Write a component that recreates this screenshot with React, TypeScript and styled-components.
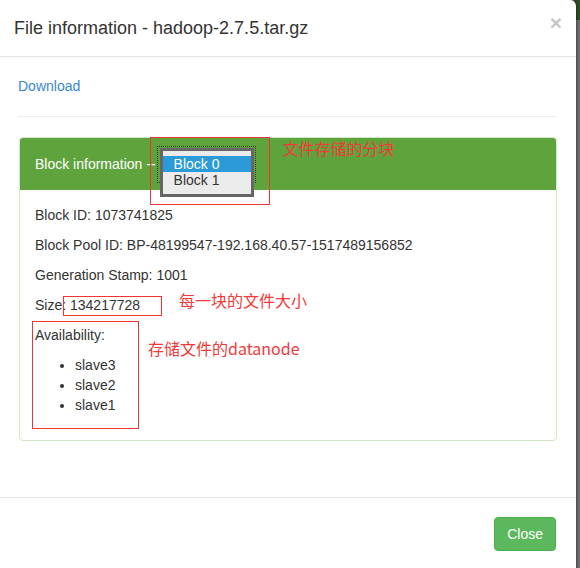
import React from "react";
import styled, { createGlobalStyle } from "styled-components";

const Global = createGlobalStyle`
  html, body { margin: 0; padding: 0; }
  body {
    width: 580px;
    height: 568px;
    overflow: hidden;
    background:
      linear-gradient(#2f4a24, #2f4a24) no-repeat right top / 6px 20px,
      #6c6c6c;
    font-family: "Liberation Sans", Arial, sans-serif;
    font-size: 14px;
    color: #333;
  }
  * { box-sizing: border-box; }
`;

const Modal = styled.div`
  width: 576px;
  height: 568px;
  background: #fff;
  border-radius: 0 6px 0 0;
  box-shadow: 1px 0 2px rgba(0, 0, 0, 0.35);
  display: flex;
  flex-direction: column;
`;

const Header = styled.div`
  height: 57px;
  padding: 15px 14px 15px 14px;
  border-bottom: 1px solid #e5e5e5;
  display: flex;
  justify-content: space-between;
  align-items: flex-start;
`;

const Title = styled.h4`
  margin: 0;
  font-size: 18px;
  line-height: 26px;
  font-weight: 500;
  color: #333;
`;

const CloseX = styled.span`
  font-size: 21px;
  line-height: 16px;
  font-weight: bold;
  color: #c6c6c6;
`;

const Body = styled.div`
  padding: 19px 19px 56px 18px;
`;

const DownloadLink = styled.a`
  display: block;
  line-height: 20px;
  color: #3a87cf;
  text-decoration: none;
`;

const Rule = styled.hr`
  margin: 20px 0;
  border: 0;
  border-top: 1px solid #eee;
  height: 0;
`;

const Panel = styled.div`
  margin-left: 1px;
  border: 1px solid #d3e8c4;
  border-radius: 4px;
`;

const PanelHeading = styled.div`
  height: 52px;
  background: #5fa33d;
  color: #fff;
  padding: 0 15px;
  display: flex;
  align-items: center;
  border-radius: 3px 3px 0 0;
  line-height: 20px;
`;

const SelectWrap = styled.span`
  position: relative;
  display: inline-block;
  width: 97px;
  height: 35px;
  margin-left: 2px;
  margin-top: 1px;
  outline: 1px dotted #333;
`;

const Popup = styled.div`
  position: absolute;
  left: 2px;
  top: 1px;
  width: 94px;
  background: #ebebeb;
  border: 3px solid #666;
  padding: 5px 0 6px;
`;

const Option = styled.div<{ $active?: boolean }>`
  height: 16px;
  line-height: 16px;
  padding-left: 11px;
  font-size: 14px;
  background: ${(p) => (p.$active ? "#2a9ad8" : "transparent")};
  color: ${(p) => (p.$active ? "#fff" : "#333")};
`;

const RedBox = styled.span<{ $l: number; $t: number; $w: number; $h: number }>`
  position: absolute;
  left: ${(p) => p.$l}px;
  top: ${(p) => p.$t}px;
  width: ${(p) => p.$w}px;
  height: ${(p) => p.$h}px;
  border: 1px solid #f03434;
  pointer-events: none;
`;

const RedNote = styled.span<{ $l: number; $t: number }>`
  position: absolute;
  left: ${(p) => p.$l}px;
  top: ${(p) => p.$t}px;
  white-space: nowrap;
  font-family: "Noto Sans CJK SC", "Liberation Sans", sans-serif;
  font-size: 16px;
  line-height: 20px;
  color: #f23a3a;
`;

const PanelBody = styled.div`
  padding: 15px;
`;

const Row = styled.p`
  margin: 0 0 10px;
  line-height: 20px;
`;

const Anchor = styled.div`
  position: relative;
`;

const List = styled.ul`
  margin: 0 0 10px;
  padding-left: 40px;
  line-height: 20px;
`;

const Footer = styled.div`
  border-top: 1px solid #e5e5e5;
  padding: 19px 20px;
  display: flex;
  justify-content: flex-end;
`;

const Button = styled.button`
  font-family: "Liberation Sans", Arial, sans-serif;
  font-size: 14px;
  line-height: 20px;
  padding: 6px 12px;
  color: #fff;
  background: #5cb85c;
  border: 1px solid #4cae4c;
  border-radius: 4px;
`;

export default function App() {
  return (
    <>
      <Global />
      <Modal>
        <Header>
          <Title>File information - hadoop-2.7.5.tar.gz</Title>
          <CloseX>×</CloseX>
        </Header>
        <Body>
          <DownloadLink href="#">Download</DownloadLink>
          <Rule />
          <Panel>
            <PanelHeading>
              Block information --
              <SelectWrap>
                <Popup>
                  <Option $active>Block 0</Option>
                  <Option>Block 1</Option>
                </Popup>
                <RedBox $l={-8} $t={-10} $w={120} $h={68} />
                <RedNote $l={125} $t={-9}>文件存储的分块</RedNote>
              </SelectWrap>
            </PanelHeading>
            <PanelBody>
              <Row>Block ID: 1073741825</Row>
              <Row>Block Pool ID: BP-48199547-192.168.40.57-1517489156852</Row>
              <Row>Generation Stamp: 1001</Row>
              <Anchor>
                <Row>Size: 134217728</Row>
                <RedBox $l={28} $t={1} $w={99} $h={20} />
                <RedNote $l={144} $t={-5}>每一块的文件大小</RedNote>
              </Anchor>
              <Anchor>
                <Row>Availability:</Row>
                <List>
                  <li>slave3</li>
                  <li>slave2</li>
                  <li>slave1</li>
                </List>
                <RedBox $l={-3} $t={-4} $w={107} $h={108} />
                <RedNote $l={113} $t={13}>存储文件的datanode</RedNote>
              </Anchor>
            </PanelBody>
          </Panel>
        </Body>
        <Footer>
          <Button>Close</Button>
        </Footer>
      </Modal>
    </>
  );
}
